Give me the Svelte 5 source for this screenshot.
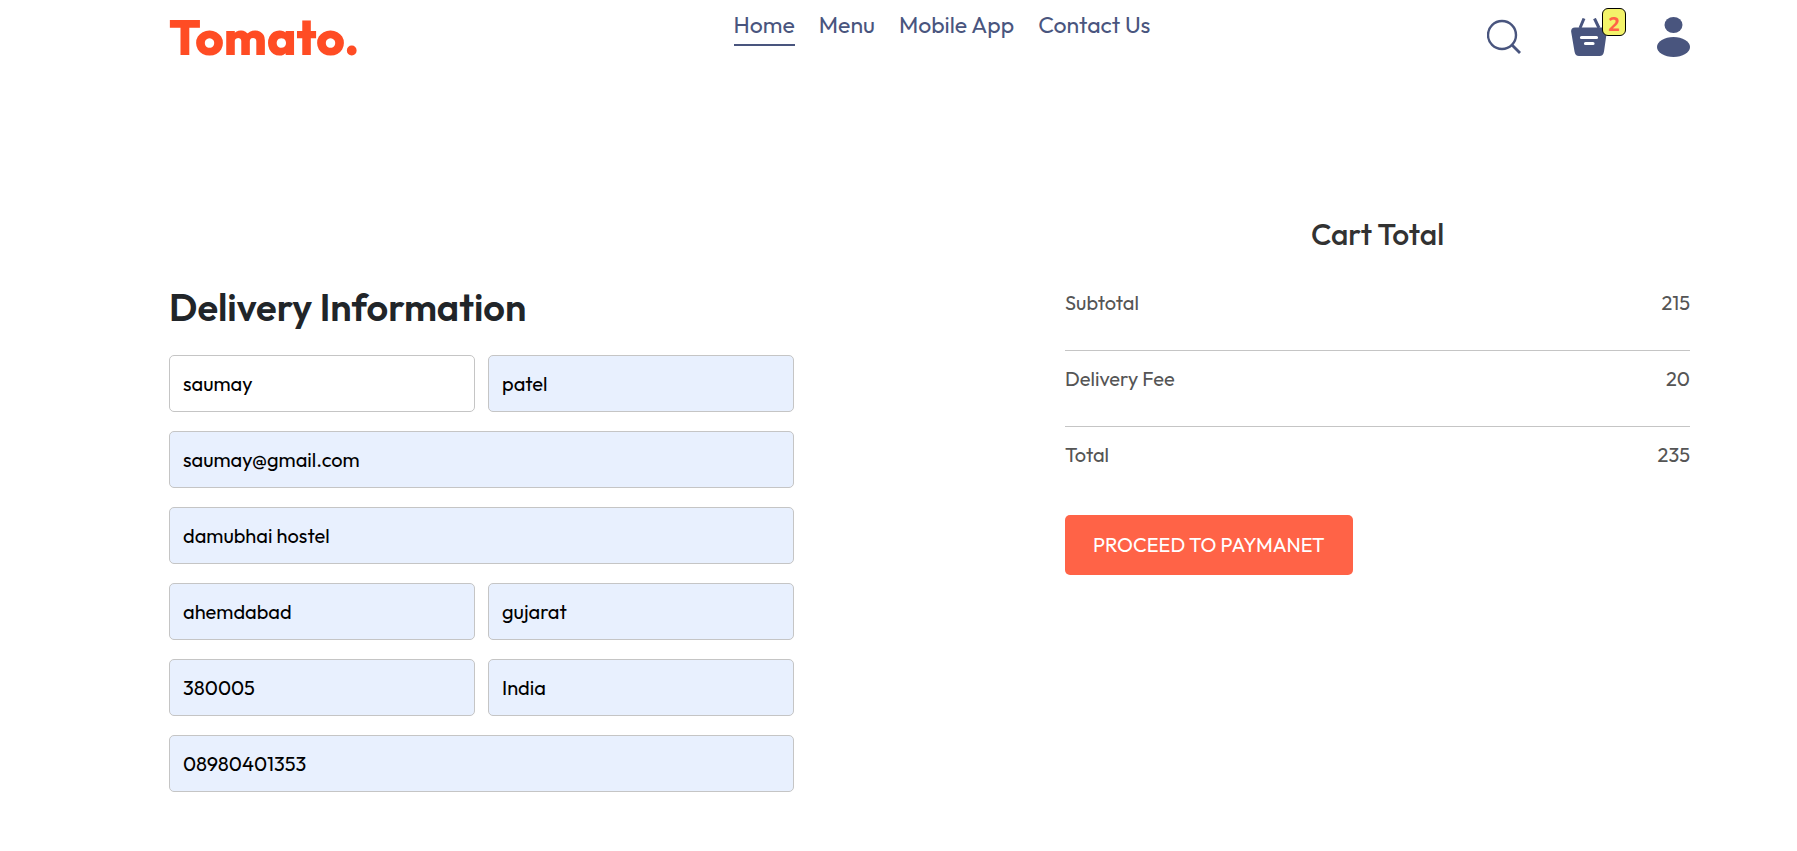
<script>
  const links = ['Home', 'Menu', 'Mobile App', 'Contact Us'];
  let active = $state('Home');

  const fields = [
    { name: 'firstName', label: 'First name', value: 'saumay', half: true, plain: true },
    { name: 'lastName', label: 'Last name', value: 'patel', half: true },
    { name: 'email', label: 'Email address', value: 'saumay@gmail.com' },
    { name: 'street', label: 'Street', value: 'damubhai hostel' },
    { name: 'city', label: 'City', value: 'ahemdabad', half: true },
    { name: 'state', label: 'State', value: 'gujarat', half: true },
    { name: 'zipcode', label: 'Zip code', value: '380005', half: true },
    { name: 'country', label: 'Country', value: 'India', half: true },
    { name: 'phone', label: 'Phone', value: '08980401353' }
  ];

  const totals = [
    ['Subtotal', 215],
    ['Delivery Fee', 20],
    ['Total', 235]
  ];
</script>

<div class="page">
  <header>
    <a class="logo" href="#home">Tomato.</a>
    <nav>
      {#each links as link}
        <a href="#{link}" class:active={active === link} onclick={() => (active = link)}>{link}</a>
      {/each}
    </nav>
    <div class="actions">
      <button type="button" aria-label="Search">
        <svg width="34" height="38" viewBox="0 0 34 38" fill="none" stroke="#49557e">
          <circle cx="15" cy="17" r="14" stroke-width="2.4" />
          <path d="M25 27 33 35" stroke-width="2.8" />
        </svg>
      </button>
      <a class="basket" href="#cart" aria-label="Cart">
        <svg width="36" height="38" viewBox="0 0 36 38">
          <path d="M13 0.5 9 10M23.5 0.5 28 10" fill="none" stroke="#49557e" stroke-width="3" />
          <path d="M4 9.5H32C35 9.5 36.2 11.5 35.8 14L33 33.500C32.500 36.500 31 38 28.500 38H8C5.500 38 4 36.500 3.500 33.500L.2 14C-.2 11.500 1 9.500 4 9.500Z" fill="#49557e" />
          <path d="M10.500 19.500H25.500M14.500 25.500H22" fill="none" stroke="#fff" stroke-width="3.200" stroke-linecap="round" />
        </svg>
        <span class="badge">2</span>
      </a>
      <button type="button" aria-label="Profile">
        <svg width="33" height="40" viewBox="0 0 33 40" fill="#49557e">
          <ellipse cx="16.5" cy="8" rx="9" ry="8" />
          <ellipse cx="16.5" cy="30" rx="16.5" ry="10" />
        </svg>
      </button>
    </div>
  </header>

  <form class="order" onsubmit={(e) => e.preventDefault()}>
    <section class="delivery">
      <h1>Delivery Information</h1>
      <div class="fields">
        {#each fields as f}
          <input class:half={f.half} class:plain={f.plain} name={f.name} aria-label={f.label} value={f.value} />
        {/each}
      </div>
    </section>
    <section class="cart">
      <h2>Cart Total</h2>
      <dl>
        {#each totals as [label, amount]}
          <div class="row"><dt>{label}</dt><dd>{amount}</dd></div>
        {/each}
      </dl>
      <button class="pay" type="submit">PROCEED TO PAYMANET</button>
    </section>
  </form>
</div>

<style>
  :global(body) {
    margin: 0;
    background: #fff;
  }
  .page {
    box-sizing: border-box;
    padding: 0 107px 0 169px;
    font-family: Outfit, Lato, sans-serif;
    font-size: 20px;
    line-height: 24px;
    color: #212529;
  }
  a {
    color: inherit;
    text-decoration: none;
  }
  button {
    padding: 0;
    border: 0;
    background: none;
    font: inherit;
    cursor: pointer;
  }
  svg {
    display: block;
  }
  header {
    display: flex;
    justify-content: space-between;
    align-items: flex-start;
    height: 73px;
  }
  .logo {
    min-width: 228px;
    padding-top: 9px;
    color: #ff4c24;
    font-size: 49px;
    font-weight: 800;
    line-height: 56px;
  }
  nav {
    display: flex;
    gap: 24px;
    padding-top: 11px;
    color: #49557e;
    font-size: 23px;
    line-height: 28px;
  }
  nav a {
    padding-bottom: 5px;
  }
  .active {
    border-bottom: 2px solid #49557e;
  }
  .actions {
    display: flex;
    align-items: center;
    gap: 50px;
    padding-top: 17px;
  }
  .basket {
    position: relative;
  }
  .badge {
    position: absolute;
    top: -10px;
    left: 31px;
    box-sizing: border-box;
    width: 24px;
    height: 28px;
    border: 1px solid #000;
    border-radius: 6px;
    background: #f3f36a;
    color: tomato;
    font-family: "Open Sans", sans-serif;
    font-size: 20px;
    font-weight: 700;
    line-height: 30px;
    text-align: center;
  }
  .order {
    display: flex;
    justify-content: space-between;
    align-items: flex-start;
    gap: 40px;
    padding-top: 143px;
  }
  section {
    flex: 0 1 625px;
    min-width: 0;
  }
  h1 {
    margin: 68px 0 25px;
    font-size: 38px;
    font-weight: 600;
    line-height: 46px;
  }
  .fields {
    display: grid;
    grid-template-columns: 1fr 1fr;
    gap: 19px 13px;
  }
  input {
    grid-column: span 2;
    box-sizing: border-box;
    width: 100%;
    min-width: 0;
    height: 57px;
    padding: 0 13px;
    border: 1px solid #c5c5c5;
    border-radius: 5px;
    background: #e8f0fe;
    color: #000;
    font: inherit;
  }
  .half {
    grid-column: span 1;
  }
  .plain {
    background: #fff;
  }
  h2 {
    margin: 0 0 23px;
    color: #323232;
    font-size: 30px;
    font-weight: 500;
    line-height: 36px;
    text-align: center;
  }
  dl {
    margin: 0 0 12px;
    color: #555;
  }
  .row {
    display: flex;
    justify-content: space-between;
    padding: 16px 0 35px;
    border-bottom: 1px solid #c5c5c5;
  }
  .row:last-child {
    border-bottom-color: transparent;
  }
  dd {
    margin: 0;
  }
  .pay {
    height: 60px;
    padding: 0 28px;
    border-radius: 5px;
    background: tomato;
    color: #fff;
  }
</style>
